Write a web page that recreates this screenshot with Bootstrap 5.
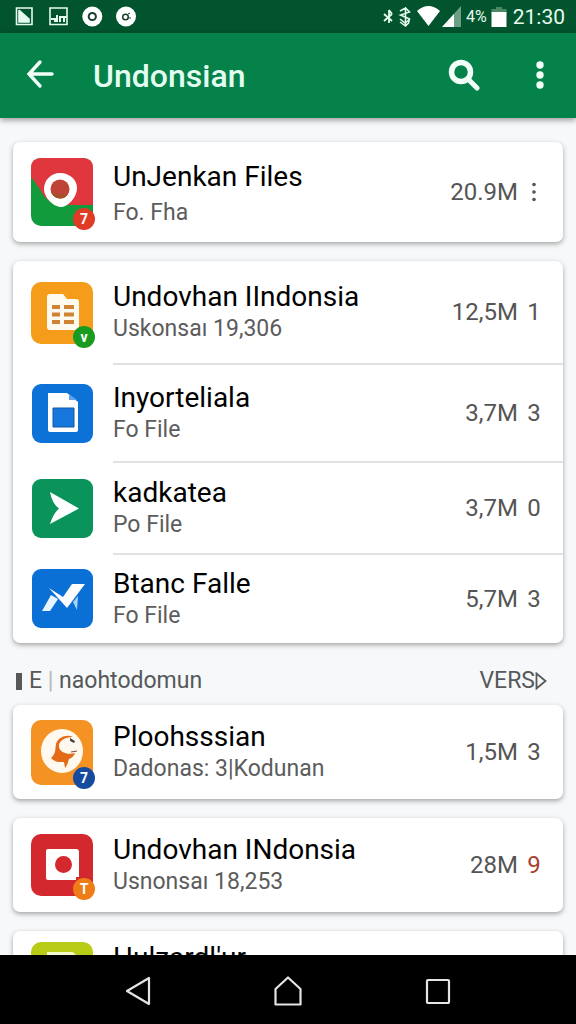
<!DOCTYPE html>
<html lang="id">
<head>
<meta charset="utf-8">
<meta name="viewport" content="width=device-width, initial-scale=1">
<title>Undonsian</title>
<link href="https://cdn.jsdelivr.net/npm/bootstrap@5.3.0/dist/css/bootstrap.min.css" rel="stylesheet">
<style>
  body { font-family: Roboto, "Liberation Sans", sans-serif; background: #f7f8f9; color: #000; }
  svg { display: block; flex: none; }
  .status-strip { background: #01542d; height: 33px; padding: 0 11px 0 14px; color: #e6fbef; }
  .status-time { font-size: 21px; line-height: 30px; padding-left: 6px; }
  .status-level { font-size: 16px; line-height: 30px; }
  .app-bar { background: #04824a; height: 85px; padding: 0 16px 0 20px; box-shadow: 0 2px 6px rgba(0,0,0,.4); z-index: 1; }
  .app-title { font-size: 32px; line-height: 40px; font-weight: 500; color: #e3fdf1; margin-left: 33px; }
  .icon-btn { border: 0; background: none; padding: 0; display: flex; align-items: center; justify-content: center; color: #f2fff9; width: 40px; height: 48px; }
  .bar-actions { gap: 36px; }
  .content-area { min-height: 0; overflow-y: auto; scrollbar-width: none; padding: 24px 13px 0; }
  .content-area::-webkit-scrollbar { display: none; }
  .app-card { background: #fff; border-radius: 7px; box-shadow: 0 2px 5px rgba(0,0,0,.34); }
  .gap-below { margin-bottom: 19px; }
  .app-row { display: flex; align-items: center; padding-left: 18px; }
  .h-100px { height: 100px; } .h-104px { height: 104px; } .h-98px { height: 98px; }
  .h-92px { height: 92px; } .h-88px { height: 88px; } .h-94px { height: 94px; } .h-84px { height: 84px; }
  .app-icon { position: relative; width: 62px; margin-right: 20px; flex: none; }
  .app-badge { position: absolute; right: -2px; bottom: -4px; width: 22px; height: 22px; border-radius: 50%; color: #fff; font-size: 14px; line-height: 22px; font-weight: 700; text-align: center; }
  .app-body { flex: 1; min-width: 0; height: 100%; display: flex; align-items: center; justify-content: space-between; padding-right: 22px; }
  .ruled { border-bottom: 2px solid #e0e1e2; }
  .app-name { font-size: 28px; line-height: 34px; font-weight: 400; margin: 0; white-space: nowrap; }
  .app-note { font-size: 23px; line-height: 30px; color: #5c5c5c; margin: 0; white-space: nowrap; }
  .app-size { font-size: 24px; line-height: 30px; color: #555; white-space: nowrap; display: flex; align-items: center; }
  .app-count { width: 14px; margin-left: 9px; text-align: center; }
  .count-alert { color: #a8402f; }
  .more-btn { color: #555; width: 14px; height: 30px; }
  .section-head { height: 62px; padding: 14px 16px 0 3px; font-size: 23px; line-height: 30px; color: #56585a; }
  .section-head h2 { font-size: 23px; line-height: 30px; font-weight: 400; margin: 0 0 0 7px; }
  .section-bar { width: 6px; height: 17px; background: #56585a; }
  .section-tick { color: #b5b7b9; }
  .section-head a { color: #56585a; text-decoration: none; }
  .nav-strip { background: #000; height: 69px; padding-top: 4px; color: #e4e4e4; }
  .nav-strip .icon-btn { width: 150px; height: 64px; color: #e4e4e4; }
</style>
</head>
<body>
<div class="vh-100 d-flex flex-column overflow-hidden">
  <div class="status-strip flex-shrink-0 d-flex align-items-center justify-content-between">
    <div class="d-flex align-items-center">
      <svg width="124" height="24" viewBox="14 3 124 24" fill="none" stroke="currentColor" stroke-width="1.600">
        <path d="M16.500 6h15.500v16.500h-15.500z"/><path d="M19 8v12M20 9l9 8v3h-10v-7z" fill="currentColor"/>
        <path d="M50 6h17v16.500h-17z"/><path d="M51 17h4v3M57 13v7M60 20v-5h4v5M65 15h2" stroke-width="2"/>
        <circle cx="92.300" cy="14.500" r="10" fill="#fff" stroke="none"/><circle cx="92.300" cy="14.500" r="3.600" stroke="#173f2c" stroke-width="2"/>
        <circle cx="126" cy="14.500" r="10" fill="#fff" stroke="none"/><circle cx="125.500" cy="15" r="2.800" stroke="#173f2c" stroke-width="1.500"/><path d="M128 12l2-1M129 16h2" stroke="#173f2c" stroke-width="1"/>
      </svg>
    </div>
    <div class="d-flex align-items-center">
      <svg width="80" height="24" viewBox="382 3 80 24" fill="none" stroke="currentColor" stroke-width="1.800">
        <path d="M384 12l8 7M384 19l8-7M389 8v13M389 8l3 4"/>
        <path d="M405.500 5v20M400 9l5.500-3 4 4-9 3 9 4-1 4-3 3-5.500-4M400 17l5 4 5-4" stroke-width="1.500"/>
        <path d="M417 9q11.500-10 23 0l-11.500 15z" fill="#fff" stroke="none"/>
        <path d="M461 4v21h-19z" fill="#6d9f84" stroke="none"/><path d="M454 12v13h-12z" fill="#fff" stroke="none"/>
      </svg>
      <span class="status-level ms-1">4%</span>
      <svg class="ms-1" width="16" height="24" viewBox="0 0 16 24"><path d="M5 2h6v2h4.500v5h-15V4H5z" fill="#4b8966"/><path d="M.5 7h15v15H.5z" fill="#fff"/></svg>
      <span class="status-time">21:30</span>
    </div>
  </div>

  <header class="app-bar flex-shrink-0 d-flex align-items-center position-relative">
    <button class="icon-btn" type="button" aria-label="Kembali">
      <svg width="28" height="34" viewBox="0 0 28 34" fill="none" stroke="currentColor" stroke-width="3.400" stroke-linecap="round"><path d="M14 3L3 15 14 27M3.500 15H26"/></svg>
    </button>
    <h1 class="app-title mb-0 me-auto">Undonsian</h1>
    <div class="bar-actions d-flex">
      <button class="icon-btn" type="button" aria-label="Cari">
        <svg width="32" height="34" viewBox="0 0 32 34" fill="none" stroke="currentColor" stroke-linecap="round"><circle cx="13" cy="13" r="9.500" stroke-width="5.500"/><path d="M21 21l8 8" stroke-width="5"/></svg>
      </button>
      <button class="icon-btn" type="button" aria-label="Menu">
        <svg width="8" height="30" viewBox="0 0 8 30" fill="currentColor"><circle cx="4" cy="4" r="3.700"/><circle cx="4" cy="14" r="3.700"/><circle cx="4" cy="24" r="3.700"/></svg>
      </button>
    </div>
  </header>

  <main class="content-area flex-grow-1">
    <section class="app-card gap-below">
      <article class="app-row h-100px">
        <div class="app-icon">
          <svg width="62" height="68" viewBox="0 0 62 68"><rect width="62" height="68" rx="10" fill="#119b3c"/><path d="M0 19V10Q0 0 10 0h42q10 0 10 10v37H40q-20 0-27-9Q6 26 0 19z" fill="#df373d"/><path d="M29 15c10 0 17 7 17 15 0 9-9 19-16 19S13 40 13 31s7-16 16-16z" fill="#fff"/><circle cx="29" cy="31" r="9.500" fill="#c04338"/><path d="M20 34q8 4 17 2-3 5-8 4.500-6 0-9-6.500z" fill="#a15328"/></svg>
          <span class="app-badge" style="background:#df3b27">7</span>
        </div>
        <div class="app-body">
          <div class="pt-1"><h3 class="app-name mb-1">UnJenkan Files</h3><p class="app-note">Fo. Fha</p></div>
          <div class="app-size">20.9M
            <button class="icon-btn more-btn app-count" type="button" aria-label="Opsi"><svg width="4" height="20" viewBox="0 0 4 20" fill="currentColor"><circle cx="2" cy="2.500" r="1.800"/><circle cx="2" cy="10" r="1.800"/><circle cx="2" cy="17.500" r="1.800"/></svg></button>
          </div>
        </div>
      </article>
    </section>

    <section class="app-card">
      <article class="app-row h-104px">
        <div class="app-icon">
          <svg width="62" height="62" viewBox="0 0 62 62"><rect width="62" height="62" rx="10" fill="#f59d1b"/><path d="M19 12h13l4 5h9q3 0 3 3v25q0 3-3 3H19q-3 0-3-3V15q0-3 3-3z" fill="#fffaf0"/><path d="M21 25h8M33 25h10M21 32.500h8M33 32.500h10M21 40h8M33 40h10" stroke="#cf8435" stroke-width="4"/></svg>
          <span class="app-badge" style="background:#189b20">v</span>
        </div>
        <div class="app-body ruled">
          <div><h3 class="app-name">Undovhan IIndonsia</h3><p class="app-note">Uskonsaı 19,306</p></div>
          <div class="app-size">12,5M<span class="app-count">1</span></div>
        </div>
      </article>
      <article class="app-row h-98px">
        <div class="app-icon">
          <svg width="62" height="60" viewBox="0 0 62 60"><rect x="1" width="61" height="59" rx="9" fill="#0d72d8"/><path d="M17 9h19l11 9v28q0 2-2 2H19q-2 0-2-2z" fill="#fff"/><path d="M38 10v6h8z" fill="#5ea4ea"/><path d="M22 24h21v19H22z" fill="#1877dc" stroke="#105ba9"/></svg>
        </div>
        <div class="app-body ruled">
          <div><h3 class="app-name">Inyorteliala</h3><p class="app-note">Fo File</p></div>
          <div class="app-size">3,7M<span class="app-count">3</span></div>
        </div>
      </article>
      <article class="app-row h-92px">
        <div class="app-icon">
          <svg width="62" height="60" viewBox="0 0 62 60"><rect x="1" width="61" height="59" rx="9" fill="#0a945c"/><path d="M19 13l29 16.500L19 45q3-10 9-15.500-7-5-9-16.500z" fill="#fff"/></svg>
        </div>
        <div class="app-body ruled">
          <div><h3 class="app-name">kadkatea</h3><p class="app-note">Po File</p></div>
          <div class="app-size">3,7M<span class="app-count">0</span></div>
        </div>
      </article>
      <article class="app-row h-88px">
        <div class="app-icon">
          <svg width="62" height="60" viewBox="0 0 62 60"><rect x="1" width="61" height="59" rx="9" fill="#0b70d5"/><path d="M41 15h13L36 39 18 19l14 9z" fill="#fff"/><path d="M20 26l7 4-8 12h-8z" fill="#e8f4ff"/><path d="M47 27l-1 14-4-8z" fill="#a9d2fb"/></svg>
        </div>
        <div class="app-body">
          <div><h3 class="app-name">Btanc Falle</h3><p class="app-note">Fo File</p></div>
          <div class="app-size">5,7M<span class="app-count">3</span></div>
        </div>
      </article>
    </section>

    <div class="section-head d-flex align-items-center justify-content-between">
      <div class="d-flex align-items-center"><span class="section-bar"></span><h2>E <span class="section-tick">|</span> naohtodomun</h2></div>
      <a href="#" class="d-flex align-items-center">VERS<svg width="12" height="18" viewBox="0 0 12 18" fill="none" stroke="currentColor" stroke-width="1.800"><path d="M1.500 1.500v15L10.500 9z"/></svg></a>
    </div>

    <section class="app-card gap-below">
      <article class="app-row h-94px">
        <div class="app-icon">
          <svg width="62" height="65" viewBox="0 0 62 65"><rect width="62" height="65" rx="10" fill="#f49324"/><ellipse cx="31" cy="31" rx="21" ry="22" fill="#fff8ef"/><path d="M42 17c-6-3-15 0-17 7-1 6 0 9-5 14 5 5 9 4 13 4l1 6c3-4 3-6 4-9 3-1 5-3 6-6-7 2-15 0-16-6-1-5 5-10 14-10z" fill="#e46b16"/><path d="M39 18l5 3-1 2-4-2z" fill="#49423e"/><path d="M40 32l6-1" stroke="#7b4530"/></svg>
          <span class="app-badge" style="background:#164a9f">7</span>
        </div>
        <div class="app-body">
          <div><h3 class="app-name">Ploohsssian</h3><p class="app-note">Dadonas: 3|Kodunan</p></div>
          <div class="app-size">1,5M<span class="app-count">3</span></div>
        </div>
      </article>
    </section>

    <section class="app-card gap-below">
      <article class="app-row h-94px">
        <div class="app-icon">
          <svg width="62" height="62" viewBox="0 0 62 62"><rect width="62" height="62" rx="10" fill="#d4282f"/><path d="M17 15h28q3 0 3 3v25h-3v3H17q-2 0-2-2V17q0-2 2-2z" fill="#fff"/><circle cx="32.500" cy="30.500" r="8.500" fill="#d4282f"/></svg>
          <span class="app-badge" style="background:#ee7d17">T</span>
        </div>
        <div class="app-body">
          <div><h3 class="app-name">Undovhan INdonsia</h3><p class="app-note">Usnonsaı 18,253</p></div>
          <div class="app-size">28M<span class="app-count count-alert">9</span></div>
        </div>
      </article>
    </section>

    <section class="app-card gap-below">
      <article class="app-row h-84px">
        <div class="app-icon">
          <svg width="62" height="62" viewBox="0 0 62 62"><rect width="62" height="62" rx="10" fill="#b7cb17"/><path d="M16 10h26l6 6v32H16z" fill="#f4f8cf"/></svg>
        </div>
        <div class="app-body">
          <div><h3 class="app-name">Hulzardl'ur</h3><p class="app-note">Fo File</p></div>
        </div>
      </article>
    </section>
  </main>

  <nav class="nav-strip flex-shrink-0 d-flex justify-content-center" aria-label="Navigasi">
    <button class="icon-btn" type="button" aria-label="Kembali"><svg width="26" height="30" viewBox="0 0 26 30" fill="none" stroke="currentColor" stroke-width="2.200" stroke-linejoin="round"><path d="M24 2v26L2 15z"/></svg></button>
    <button class="icon-btn" type="button" aria-label="Beranda"><svg width="28" height="30" viewBox="0 0 28 30" fill="none" stroke="currentColor" stroke-width="2.200" stroke-linejoin="round"><path d="M14 1.500L26.500 13v15.500h-25V13z"/></svg></button>
    <button class="icon-btn" type="button" aria-label="Terbaru"><svg width="26" height="26" viewBox="0 0 26 26" fill="none" stroke="currentColor" stroke-width="2.200"><rect x="2" y="2" width="22" height="23" rx="1"/></svg></button>
  </nav>
</div>
<script src="https://cdn.jsdelivr.net/npm/bootstrap@5.3.0/dist/js/bootstrap.bundle.min.js"></script>
</body>
</html>
